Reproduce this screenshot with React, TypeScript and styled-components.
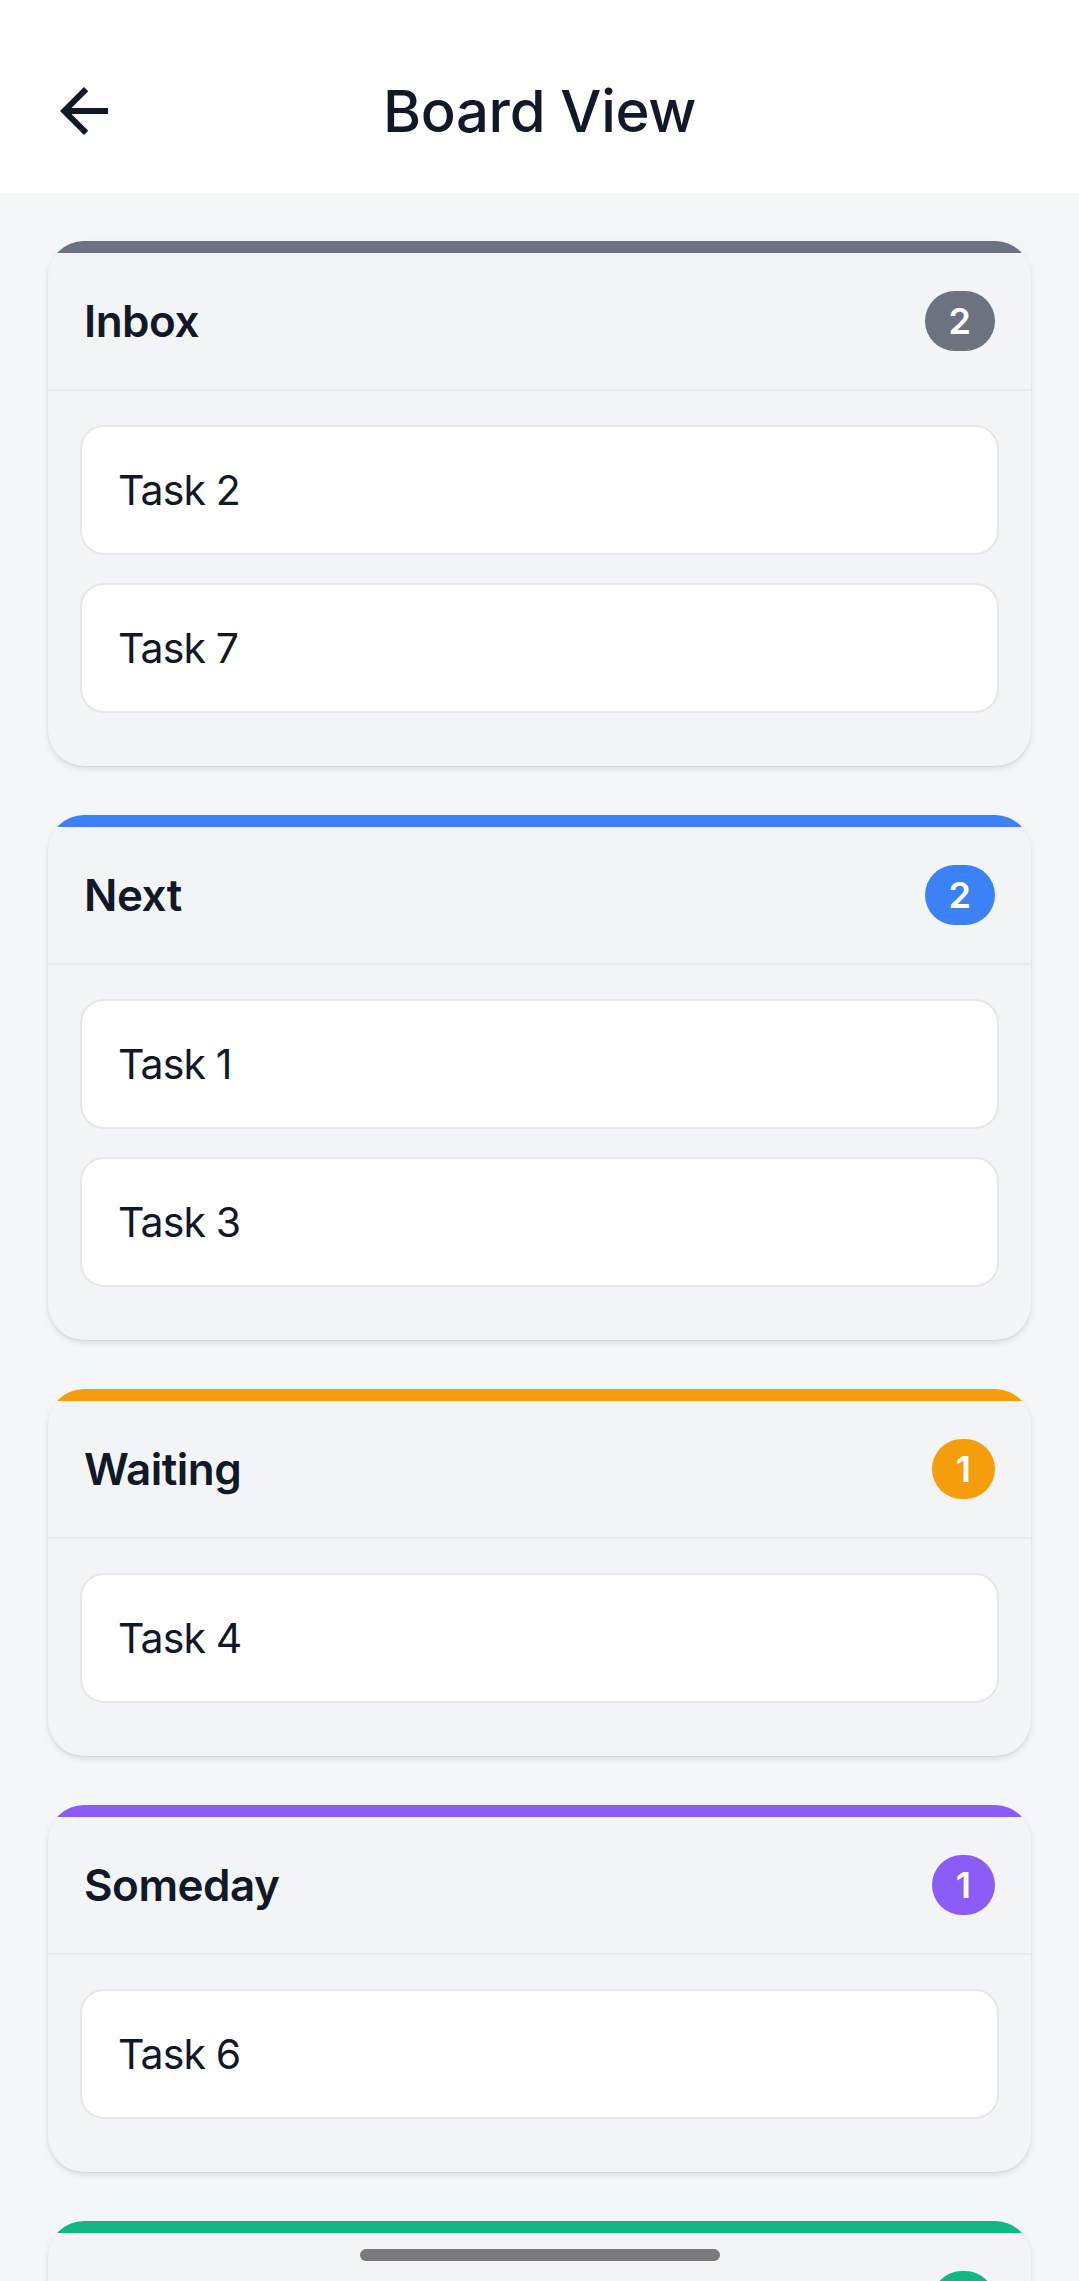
import React from "react";
import styled, { createGlobalStyle } from "styled-components";

const GlobalStyle = createGlobalStyle`
  html, body {
    margin: 0;
    padding: 0;
    background: #f5f6f8;
  }
  body {
    font-family: Inter, "Noto Sans", "Liberation Sans", sans-serif;
    color: #111827;
    -webkit-font-smoothing: antialiased;
  }
  * { box-sizing: border-box; }
`;

const Screen = styled.div`
  min-height: 2281px;
  background: #f5f6f8;
`;

const TopBar = styled.header`
  height: 193px;
  background: #ffffff;
  padding: 28px 48px 0 48px;
  display: grid;
  grid-template-columns: 72px 1fr 72px;
  align-items: center;
`;

const BackButton = styled.button`
  width: 72px;
  height: 72px;
  padding: 0;
  border: none;
  background: transparent;
  color: #111827;
  display: flex;
  align-items: center;
  justify-content: center;
  cursor: pointer;
`;

const Title = styled.h1`
  margin: 0;
  text-align: center;
  font-size: 58px;
  font-weight: 500;
  line-height: 72px;
  color: #111827;
  letter-spacing: -0.3px;
`;

const Board = styled.main`
  padding: 48px 48px 48px 48px;
  display: flex;
  flex-direction: column;
  gap: 49px;
`;

const Column = styled.section`
  background: #f3f4f6;
  border-radius: 36px;
  overflow: hidden;
  box-shadow: 0 3px 6px rgba(0, 0, 0, 0.1), 0 1px 2px rgba(0, 0, 0, 0.06);
`;

const AccentBar = styled.div<{ $accent: string }>`
  height: 12px;
  background: ${(p) => p.$accent};
`;

const ColumnHeader = styled.div`
  height: 138px;
  padding: 0 36px;
  display: flex;
  align-items: center;
  justify-content: space-between;
  border-bottom: 2px solid #e5e7eb;
`;

const ColumnTitle = styled.h2`
  margin: 0;
  font-size: 44px;
  font-weight: 600;
  line-height: 56px;
  color: #111827;
  letter-spacing: -0.5px;
`;

const CountBadge = styled.span<{ $accent: string }>`
  min-width: 60px;
  height: 60px;
  padding: 12px 24px;
  border-radius: 30px;
  background: ${(p) => p.$accent};
  color: #ffffff;
  font-size: 36px;
  font-weight: 600;
  line-height: 36px;
  display: inline-flex;
  align-items: center;
  justify-content: center;
`;

const TaskList = styled.div`
  padding: 34px 32px 53px 32px;
  display: flex;
  flex-direction: column;
  gap: 28px;
`;

const TaskCard = styled.div`
  height: 130px;
  background: #ffffff;
  border: 2px solid #e5e7eb;
  border-radius: 24px;
  padding: 0 36px;
  display: flex;
  align-items: center;
  font-size: 41px;
  font-weight: 400;
  letter-spacing: -0.9px;
  color: #111827;
`;

const NavHandle = styled.div`
  position: fixed;
  left: 50%;
  bottom: 20px;
  width: 360px;
  height: 12px;
  margin-left: -180px;
  border-radius: 6px;
  background: #7a7a7c;
`;

const ArrowBack = () => (
  <svg width="72" height="72" viewBox="0 0 24 24" aria-hidden="true">
    <path
      fill="currentColor"
      d="M20 11H7.83l5.59-5.59L12 4l-8 8 8 8 1.41-1.41L7.83 13H20v-2z"
    />
  </svg>
);

type ColumnData = { name: string; color: string; tasks: string[] };

const columns: ColumnData[] = [
  { name: "Inbox", color: "#6b7280", tasks: ["Task 2", "Task 7"] },
  { name: "Next", color: "#3b82f6", tasks: ["Task 1", "Task 3"] },
  { name: "Waiting", color: "#f59e0b", tasks: ["Task 4"] },
  { name: "Someday", color: "#8b5cf6", tasks: ["Task 6"] },
  { name: "Done", color: "#10b981", tasks: ["Task 5"] },
];

export default function App() {
  return (
    <Screen>
      <GlobalStyle />
      <TopBar>
        <BackButton aria-label="Back">
          <ArrowBack />
        </BackButton>
        <Title>Board View</Title>
        <span />
      </TopBar>
      <Board>
        {columns.map((col) => (
          <Column key={col.name}>
            <AccentBar $accent={col.color} />
            <ColumnHeader>
              <ColumnTitle>{col.name}</ColumnTitle>
              <CountBadge $accent={col.color}>{col.tasks.length}</CountBadge>
            </ColumnHeader>
            <TaskList>
              {col.tasks.map((t) => (
                <TaskCard key={t}>{t}</TaskCard>
              ))}
            </TaskList>
          </Column>
        ))}
      </Board>
      <NavHandle />
    </Screen>
  );
}
